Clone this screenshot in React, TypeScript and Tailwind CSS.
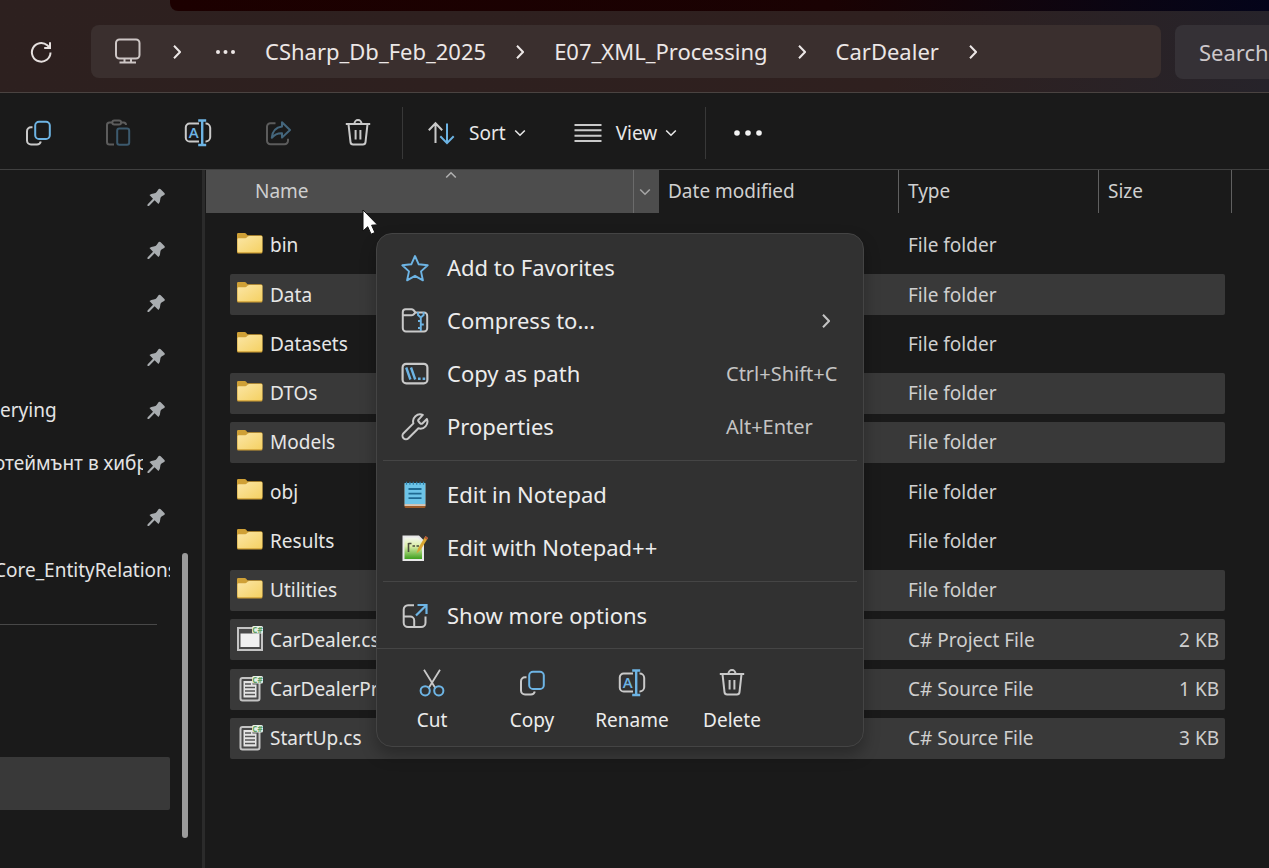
import React from "react";

const GREY = "#c9c9c9";
const BLUE = "#6db4e4";

type IconProps = { className?: string };

function Svg({ className = "size-7", children }: IconProps & { children: React.ReactNode }) {
  return (
    <svg viewBox="0 0 28 28" fill="none" strokeWidth="2" className={`shrink-0 ${className}`} aria-hidden="true">
      {children}
    </svg>
  );
}

const CopyIcon = (p: IconProps) => (
  <Svg {...p}>
    <path d="M8.5 8.2H7a4 4 0 0 0-4 4v9.3a4 4 0 0 0 4 4h6a4 4 0 0 0 3.8-3" stroke={GREY} />
    <rect x="11.2" y="2.8" width="14.6" height="17.2" rx="3.8" stroke={BLUE} />
  </Svg>
);

const PasteIcon = (p: IconProps) => (
  <Svg {...p}>
    <path d="M8 3.5H5.5a2.5 2.5 0 0 0-2.5 2.5v17a2.5 2.5 0 0 0 2.5 2.5H10M17 3.5h2.5A2.5 2.5 0 0 1 22 6" stroke="#5c5c5c" />
    <rect x="8.3" y="1.6" width="8.8" height="4" rx="2" stroke="#5c5c5c" />
    <rect x="13.2" y="9.5" width="12" height="16.2" rx="2.2" stroke="#3c5a6e" />
  </Svg>
);

const RenameIcon = (p: IconProps) => (
  <Svg {...p}>
    <path d="M15 4.5H5.6A3.8 3.8 0 0 0 1.8 8.3v10.4a3.8 3.8 0 0 0 3.8 3.8H15M21.5 4.5a4.5 4.5 0 0 1 4.7 4.2v9.6a4.5 4.5 0 0 1-4.7 4.2" stroke={GREY} />
    <path d="M18.2 1.5v24.5M14.2 1.5h8M14.2 26h8" stroke={BLUE} strokeWidth="2.4" />
    <text x="9.8" y="18.8" textAnchor="middle" fontSize="15" fontWeight="600" fontFamily="Open Sans, sans-serif" fill={BLUE} stroke="none">A</text>
  </Svg>
);

const ShareIcon = (p: IconProps) => (
  <Svg {...p}>
    <path d="M11.5 4.2H6.5A3.5 3.5 0 0 0 3 7.7v14a3.5 3.5 0 0 0 3.5 3.5h14a3.5 3.5 0 0 0 3.5-3.5v-2" stroke="#5c5c5c" />
    <path d="M18 3.2l8 7.8-8 7.6v-4.4c-4.5-.2-7.5 1.3-10.2 4.6.6-6.4 4.2-10.4 10.2-11.2z" stroke="#44667c" strokeLinejoin="round" />
  </Svg>
);

const TrashIcon = (p: IconProps) => (
  <Svg {...p}>
    <path d="M1.8 5h24.4M4.5 5.2l2 18a2.6 2.6 0 0 0 2.6 2.3h9.8a2.6 2.6 0 0 0 2.6-2.3l2-18M10.5 4.6a3.5 3.5 0 0 1 7 0M11.6 11v9.5M16.4 11v9.5" stroke={GREY} />
  </Svg>
);

const CutIcon = (p: IconProps) => (
  <Svg {...p}>
    <path d="M6 .8l11.6 18.6M22 .8L10.4 19.4" stroke={GREY} strokeWidth="1.8" />
    <circle cx="7.2" cy="21.8" r="4.6" stroke={BLUE} />
    <circle cx="20.8" cy="21.8" r="4.6" stroke={BLUE} />
  </Svg>
);

const StarIcon = (p: IconProps) => (
  <Svg {...p}>
    <path d="M14 2l3.7 8.3 9 1-6.7 6.1 1.9 8.9L14 21.8l-7.9 4.5L8 17.4l-6.7-6.1 9-1z" stroke={BLUE} strokeWidth="1.9" strokeLinejoin="round" />
  </Svg>
);

const ZipIcon = (p: IconProps) => (
  <Svg {...p}>
    <path d="M1.8 8v13.2a3.2 3.2 0 0 0 3.2 3.2h18a3.2 3.2 0 0 0 3.2-3.2V8.7a3.2 3.2 0 0 0-3.2-3.2h-8.5L12.4 3a3 3 0 0 0-1.9-.7H4.6A2.8 2.8 0 0 0 1.8 5v3M1.8 8.2h8.7a3 3 0 0 0 2-.8l2-1.9" stroke={GREY} />
    <path d="M17 5v3l2.8 2.5v13.500M22.6 5v3l-2.8 2.5M17 14h3M19.8 17.5h3M17 21h3" stroke={BLUE} strokeWidth="1.9" />
  </Svg>
);

const PathIcon = (p: IconProps) => (
  <Svg {...p}>
    <rect x="1.6" y="3.8" width="24.8" height="19.6" rx="3.6" stroke={GREY} strokeWidth="2.2" />
    <path d="M5.2 7.5l4.200 12M10 7.5l4.200 12" stroke={BLUE} strokeWidth="2.4" />
    <path d="M17 17.5h2.600v2.600H17zM21.6 17.5h2.600v2.600h-2.600z" fill={BLUE} />
  </Svg>
);

const WrenchIcon = (p: IconProps) => (
  <Svg {...p}>
    <path d="M21.8 1.9a7 7 0 0 0-9.4 8.5l-9.9 9.9a3.4 3.4 0 0 0 4.9 4.9l10-9.9a7 7 0 0 0 8.5-9.3l-4.3 4.2a1.8 1.8 0 0 1-2.5 0l-1.3-1.4a1.8 1.8 0 0 1 0-2.5z" stroke={GREY} strokeLinejoin="round" />
  </Svg>
);

const NotepadIcon = (p: IconProps) => (
  <Svg {...p}>
    <path d="M3.5 3h21v22.5a1.5 1.5 0 0 1-1.5 1.5H5a1.5 1.5 0 0 1-1.5-1.500z" fill="#9c5a28" />
    <path d="M3.5 2h21v21.300h-21z" fill="#6cc4e8" />
    <path d="M3.5 23.300h21v1.500h-21z" fill="#e9e4dc" />
    <path d="M5.5 .8v3M8.9 .8v3M12.3 .8v3M15.7 .8v3M19.1 .8v3M22.5 .8v3" stroke="#2c7da6" strokeWidth="1.2" />
    <path d="M7.5 8h13M7.5 12.600h13M7.5 17.200h13" stroke="#1f6a92" strokeWidth="1.800" />
  </Svg>
);

const NotepadPlusIcon = (p: IconProps) => (
  <Svg {...p}>
    <defs>
      <linearGradient id="npp" x1="0" y1="0" x2="0" y2="1">
        <stop offset="0" stopColor="#f3f6ee" />
        <stop offset=".4" stopColor="#dcefa8" />
        <stop offset="1" stopColor="#3f9f1e" />
      </linearGradient>
    </defs>
    <path d="M1.5 1.5h16.500l5 5V27H1.500z" fill="#e8e8e8" />
    <path d="M3.5 3.5h13l4.500 4.500v17H3.500z" fill="url(#npp)" />
    <path d="M7.5 9v9M7.5 9.500h3M11.500 12h2.500M15.500 12h2.500" stroke="#4a4a3c" strokeWidth="1.600" />
    <path d="M24.5 2L17 14.500l-1.500 5 4-3.500L27 4z" fill="#d9a531" />
    <path d="M24.5 2L27 4l-1 1.800L23.500 4z" fill="#b6553c" />
  </Svg>
);

const MoreOptionsIcon = (p: IconProps) => (
  <Svg {...p}>
    <path d="M13 3.2H7A4.3 4.3 0 0 0 2.7 7.5v13.2A4.3 4.3 0 0 0 7 25h13.200a4.3 4.3 0 0 0 4.300-4.300V14.500M2.7 14.500h6.500a4 4 0 0 1 4 4V25" stroke={GREY} />
    <path d="M16.5 3h9v9M25.3 3.200L15 13.500" stroke={BLUE} strokeWidth="2.200" />
  </Svg>
);

const Chevron = ({ className = "" }: IconProps) => (
  <svg viewBox="0 0 8 14" fill="none" stroke="currentColor" strokeWidth="2" className={`h-3.5 w-2 shrink-0 ${className}`} aria-hidden="true">
    <path d="M1 .8L7 7l-6 6.2" />
  </svg>
);

const Caret = ({ className = "" }: IconProps) => (
  <svg viewBox="0 0 12 8" fill="none" stroke="currentColor" strokeWidth="1.6" className={`h-2 w-3 shrink-0 ${className}`} aria-hidden="true">
    <path d="M1.2 1.5L6 6.2l4.8-4.7" />
  </svg>
);

const PinIcon = () => (
  <svg viewBox="0 0 18 18" fill="#a9adb0" className="size-[18px] shrink-0" aria-hidden="true">
    <path d="M11.7 1q1-.8 2 .2l3.700 3.800q1 1.200-.3 2l-2.600 1.500q-1.300.9-1.300 3.300 0 2.700-1.800 4.200L7.600 12.300 2 18H.5v-1.500L6 10.700 2.500 7q1.700-1.600 4.100-1.600 2.200 0 3-1.400z" />
  </svg>
);

const FolderIcon = () => (
  <svg viewBox="0 0 26 29" className="h-[29px] w-[26px] shrink-0" aria-hidden="true">
    <defs>
      <linearGradient id="folder" x1="0" y1="0" x2="1" y2="1">
        <stop offset="0" stopColor="#fbe6a6" />
        <stop offset="1" stopColor="#f5d163" />
      </linearGradient>
    </defs>
    <path d="M0 3.200a1.2 1.2 0 0 1 1.200-1.200h6.500a2 2 0 0 1 1.500.7l1.200 1.500H24a1.500 1.500 0 0 1 1.500 1.500V21a1.500 1.500 0 0 1-1.500 1.500H1.500A1.500 1.500 0 0 1 0 21z" fill="#cfa036" />
    <path d="M.5 8.200q0-1 1-1h6.800q.8 0 1.500-.7l1-1q.6-.5 1.500-.5h12q1 0 1 1V20q0 1.200-1.200 1.200H1.700Q.5 21.200.5 20z" fill="url(#folder)" />
  </svg>
);

const CSharpBadge = () => (
  <>
    <rect x="15" y="1" width="11" height="7.5" rx="1.5" fill="#e8efe6" />
    <text x="20.5" y="7.600" textAnchor="middle" fontSize="8" fontWeight="700" fontFamily="Open Sans, sans-serif" fill="#5f9f62">C#</text>
  </>
);

const ProjectIcon = () => (
  <svg viewBox="0 0 26 29" fill="none" className="h-[29px] w-[26px] shrink-0" aria-hidden="true">
    <rect x="1" y="3" width="24" height="22" stroke="#c4c4c4" strokeWidth="2" fill="#4a4a4a" />
    <rect x="3.5" y="8.5" width="19" height="13.500" fill="#f0f0f0" />
    <CSharpBadge />
  </svg>
);

const SourceIcon = () => (
  <svg viewBox="0 0 26 29" fill="none" className="h-[29px] w-[26px] shrink-0" aria-hidden="true">
    <rect x="3.5" y="3" width="19" height="22.5" rx="2" stroke="#c4c4c4" strokeWidth="2" fill="#4a4a4a" />
    <path d="M6.5 6h9v3.500h4V22.500h-13z" fill="#e4e4e4" />
    <path d="M8 9h6M8 12.500h10M8 16h10M8 19.500h10" stroke="#555" strokeWidth="1.400" />
    <CSharpBadge />
  </svg>
);

type Entry = { name: string; kind: "folder" | "project" | "source"; type: string; size?: string; selected?: boolean };

const entries: Entry[] = [
  { name: "bin", kind: "folder", type: "File folder" },
  { name: "Data", kind: "folder", type: "File folder", selected: true },
  { name: "Datasets", kind: "folder", type: "File folder" },
  { name: "DTOs", kind: "folder", type: "File folder", selected: true },
  { name: "Models", kind: "folder", type: "File folder", selected: true },
  { name: "obj", kind: "folder", type: "File folder" },
  { name: "Results", kind: "folder", type: "File folder" },
  { name: "Utilities", kind: "folder", type: "File folder", selected: true },
  { name: "CarDealer.csproj", kind: "project", type: "C# Project File", size: "2 KB", selected: true },
  { name: "CarDealerProfile.cs", kind: "source", type: "C# Source File", size: "1 KB", selected: true },
  { name: "StartUp.cs", kind: "source", type: "C# Source File", size: "3 KB", selected: true },
];

const pinned = ["", "", "", "", "erying", "отеймънт в хибр", ""];

function AddressRow() {
  return (
    <header className="border-b border-[#4a4341] bg-linear-to-r from-[#2d201f] via-[#2f201f] via-70% to-[#26232a]">
      <div className="ml-[170px] h-[11px] rounded-bl-lg bg-linear-to-r from-[#1c0000] via-[#1a0203] via-60% to-[#04041a]" />
      <div className="flex items-start pt-3.5 pb-[13px]">
        <button aria-label="Refresh" className="flex h-[53px] w-[91px] shrink-0 items-center pl-[30px]">
          <svg viewBox="0 0 22 22" fill="none" stroke="#e6e0df" strokeWidth="2" className="size-[22px]" aria-hidden="true">
            <path d="M20.5 11.500a9.300 9.300 0 1 1-3.200-7.200l2.200 2.200M20 1.200V7h-5.800" />
          </svg>
        </button>
        <nav aria-label="Address" className="flex h-[53px] min-w-0 flex-1 items-center gap-[30px] overflow-hidden rounded-lg bg-[#3a2f2e] pl-6 text-[22px] whitespace-nowrap text-[#ece7e6]">
          <svg viewBox="0 0 28 28" fill="none" stroke="#cdc6c5" strokeWidth="2" className="size-7 shrink-0" aria-hidden="true">
            <rect x="1" y="1.500" width="23.500" height="19" rx="3.500" />
            <path d="M9.500 21v3.500M16 21v3.500M4.500 24.500h16.500" />
          </svg>
          <Chevron />
          <button aria-label="More folders" className="w-6 shrink-0">
            <svg viewBox="0 0 24 6" fill="currentColor" className="h-1.5 w-6" aria-hidden="true">
              <circle cx="7" cy="3" r="2" />
              <circle cx="14.500" cy="3" r="2" />
              <circle cx="22" cy="3" r="2" />
            </svg>
          </button>
          <a href="#db">CSharp_Db_Feb_2025</a>
          <Chevron />
          <a href="#xml">E07_XML_Processing</a>
          <Chevron />
          <a href="#cardealer">CarDealer</a>
          <Chevron />
        </nav>
        <input
          aria-label="Search CarDealer"
          placeholder="Search CarDealer"
          className="ml-3.5 h-[54px] w-[94px] shrink-0 rounded-l-lg bg-[#353136] pl-6 text-[22px] text-[#cdc8cb] placeholder:text-[#cdc8cb]"
        />
      </div>
    </header>
  );
}

function Toolbar() {
  return (
    <div role="toolbar" className="flex h-[77px] items-center border-b border-[#404040] bg-[#1a1a1a] pt-1 text-[19px] text-[#e8e8e8]">
      <div className="flex gap-6 pl-2.5">
        <button aria-label="Copy" className="flex w-14 justify-center"><CopyIcon /></button>
        <button aria-label="Paste" className="flex w-14 justify-center" disabled><PasteIcon /></button>
        <button aria-label="Rename" className="flex w-14 justify-center"><RenameIcon /></button>
        <button aria-label="Share" className="flex w-14 justify-center" disabled><ShareIcon /></button>
        <button aria-label="Delete" className="flex w-14 justify-center"><TrashIcon /></button>
      </div>
      <div className="ml-4 h-[52px] w-px bg-[#383838]" />
      <button className="ml-6 flex items-center">
        <svg viewBox="0 0 28 28" fill="none" strokeWidth="2" className="size-7" aria-hidden="true">
          <path d="M8.500 24V4.500M1.800 11.200l6.700-6.900 6.700 6.900" stroke={GREY} />
          <path d="M20 4.500v19.300M13.300 17.200l6.700 6.900 6.700-6.900" stroke={BLUE} />
        </svg>
        <span className="ml-3.5">Sort</span>
        <Caret className="ml-2" />
      </button>
      <button className="ml-12 flex items-center">
        <svg viewBox="0 0 28 28" fill="none" stroke={GREY} strokeWidth="2" className="size-7" aria-hidden="true">
          <path d="M.5 6h27M.5 11.300h27M.5 16.700h27M.5 22h27" />
        </svg>
        <span className="ml-3.5">View</span>
        <Caret className="ml-2" />
      </button>
      <div className="ml-7 h-[52px] w-px bg-[#383838]" />
      <button aria-label="See more" className="ml-7">
        <svg viewBox="0 0 28 6" fill="#f2f2f2" className="h-1.5 w-7" aria-hidden="true">
          <circle cx="3" cy="3" r="2.800" />
          <circle cx="14" cy="3" r="2.800" />
          <circle cx="25" cy="3" r="2.800" />
        </svg>
      </button>
    </div>
  );
}

function Sidebar() {
  return (
    <aside className="flex w-[205px] shrink-0 border-r-[3px] border-[#2b2b2b] text-[19px] text-[#e4e4e4]">
      <div className="w-[170px] overflow-hidden">
        <ul className="grid h-[427px] auto-rows-fr whitespace-nowrap">
          {pinned.map((label, i) => (
            <li key={i} className="flex items-center justify-between pr-[5px]">
              <span className="flex w-[143px] overflow-hidden">
                <span className={i === 5 ? "-ml-1.5" : ""}>{label}</span>
              </span>
              <PinIcon />
            </li>
          ))}
          <li className="flex items-center overflow-hidden">
            <span className="-ml-1.5">Core_EntityRelations</span>
          </li>
        </ul>
        <hr className="mt-[27px] mr-[13px] border-[#484848]" />
        <div className="mt-[132px] h-[53px] rounded-r-xs bg-[#393939]" />
      </div>
      <div className="mt-[383px] ml-3 h-[285px] w-1.5 rounded-full bg-[#9b9b9b]" />
    </aside>
  );
}

function FileTable() {
  return (
    <table className="h-[593px] w-[1026px] table-fixed border-separate border-spacing-0 text-left text-[19px] text-[#cfcfcf]">
      <colgroup>
        <col className="w-[453px]" />
        <col className="w-[240px]" />
        <col className="w-[200px]" />
        <col className="w-[133px]" />
      </colgroup>
      <thead>
        <tr className="h-[51px] align-top">
          <th className="p-0 font-normal">
            <div className="flex h-[43px] bg-[#4d4d4d]">
              <button className="flex flex-1 items-center justify-between pr-44 pl-[49px] text-left">
                <span>Name</span>
                <Caret className="mt-px rotate-180 self-start text-[#b0b0b0]" />
              </button>
              <button aria-label="Filter by name" className="flex w-[26px] items-center border-l border-[#6b6b6b] pl-[5px] text-[#a5a5a5]">
                <Caret />
              </button>
            </div>
          </th>
          <th className="p-0 font-normal">
            <div className="flex h-[43px] items-center border-r border-[#606060] pl-[9px]">Date modified</div>
          </th>
          <th className="p-0 font-normal">
            <div className="flex h-[43px] items-center border-r border-[#606060] pl-[9px]">Type</div>
          </th>
          <th className="p-0 font-normal">
            <div className="flex h-[43px] items-center border-r border-[#606060] pl-[9px]">Size</div>
          </th>
        </tr>
      </thead>
      <tbody>
        {entries.map((e) => {
          const fill = e.selected ? "bg-[#393939]" : "";
          return (
            <tr key={e.name}>
              <td className="p-0 pl-6">
                <div className={`flex h-[41px] items-center rounded-l-xs pl-[7px] text-[#e6e6e6] ${fill}`}>
                  {e.kind === "folder" ? <FolderIcon /> : e.kind === "project" ? <ProjectIcon /> : <SourceIcon />}
                  <span className="ml-[7px]">{e.name}</span>
                </div>
              </td>
              <td className="p-0">
                <div className={`h-[41px] ${fill}`} />
              </td>
              <td className="p-0">
                <div className={`flex h-[41px] items-center pl-[9px] ${fill}`}>{e.type}</div>
              </td>
              <td className="p-0 pr-[7px]">
                <div className={`flex h-[41px] items-center justify-end rounded-r-xs pr-[6px] ${fill}`}>{e.size}</div>
              </td>
            </tr>
          );
        })}
      </tbody>
    </table>
  );
}

function MenuItem({ icon, label, hint }: { icon: React.ReactNode; label: string; hint?: React.ReactNode }) {
  return (
    <button role="menuitem" className="flex h-[53px] w-full items-center pl-6 text-left">
      {icon}
      <span className="ml-[18px] flex-1">{label}</span>
      {hint && <span className="w-[137px] text-[20px] text-[#c4c4c4]">{hint}</span>}
    </button>
  );
}

function MenuAction({ icon, label }: { icon: React.ReactNode; label: string }) {
  return (
    <button role="menuitem" className="flex w-[100px] flex-col items-center gap-[9px] text-[19px] leading-7">
      {icon}
      {label}
    </button>
  );
}

function ContextMenu() {
  return (
    <div role="menu" className="absolute top-[63px] left-[171px] w-[488px] rounded-2xl border border-[#444444] bg-[#313131] text-[22px] text-[#ececec] shadow-[0_8px_16px_rgba(0,0,0,0.28)]">
      <div className="pt-[7px]">
        <MenuItem icon={<StarIcon />} label="Add to Favorites" />
        <MenuItem icon={<ZipIcon />} label="Compress to..." hint={<Chevron className="ml-24" />} />
        <MenuItem icon={<PathIcon />} label="Copy as path" hint="Ctrl+Shift+C" />
        <MenuItem icon={<WrenchIcon />} label="Properties" hint="Alt+Enter" />
        <hr className="mx-1.5 my-[7px] border-[#454545]" />
        <MenuItem icon={<NotepadIcon />} label="Edit in Notepad" />
        <MenuItem icon={<NotepadPlusIcon />} label="Edit with Notepad++" />
        <hr className="mx-1.5 my-[7px] border-[#454545]" />
        <MenuItem icon={<MoreOptionsIcon />} label="Show more options" />
      </div>
      <div className="mt-1.5 flex border-t border-[#454545] pt-5 pb-3 pl-[5px]">
        <MenuAction icon={<CutIcon />} label="Cut" />
        <MenuAction icon={<CopyIcon />} label="Copy" />
        <MenuAction icon={<RenameIcon />} label="Rename" />
        <MenuAction icon={<TrashIcon />} label="Delete" />
      </div>
    </div>
  );
}

export default function App() {
  return (
    <div className="flex min-h-screen flex-col overflow-hidden bg-[#1a1a1a] font-['Noto_Sans','Open_Sans',sans-serif]">
      <AddressRow />
      <Toolbar />
      <div className="flex flex-1">
        <Sidebar />
        <main className="relative min-w-0 flex-1 pl-px">
          <FileTable />
          <ContextMenu />
          <svg viewBox="0 0 16 26" className="absolute top-[39px] left-[157px] h-[26px] w-4" aria-hidden="true">
            <path d="M1 1v21l4.700-4.300 3.400 7.500 3.800-1.700-3.300-7.300 5.900-.4z" fill="#fff" stroke="#111" strokeWidth="1" />
          </svg>
        </main>
      </div>
    </div>
  );
}
